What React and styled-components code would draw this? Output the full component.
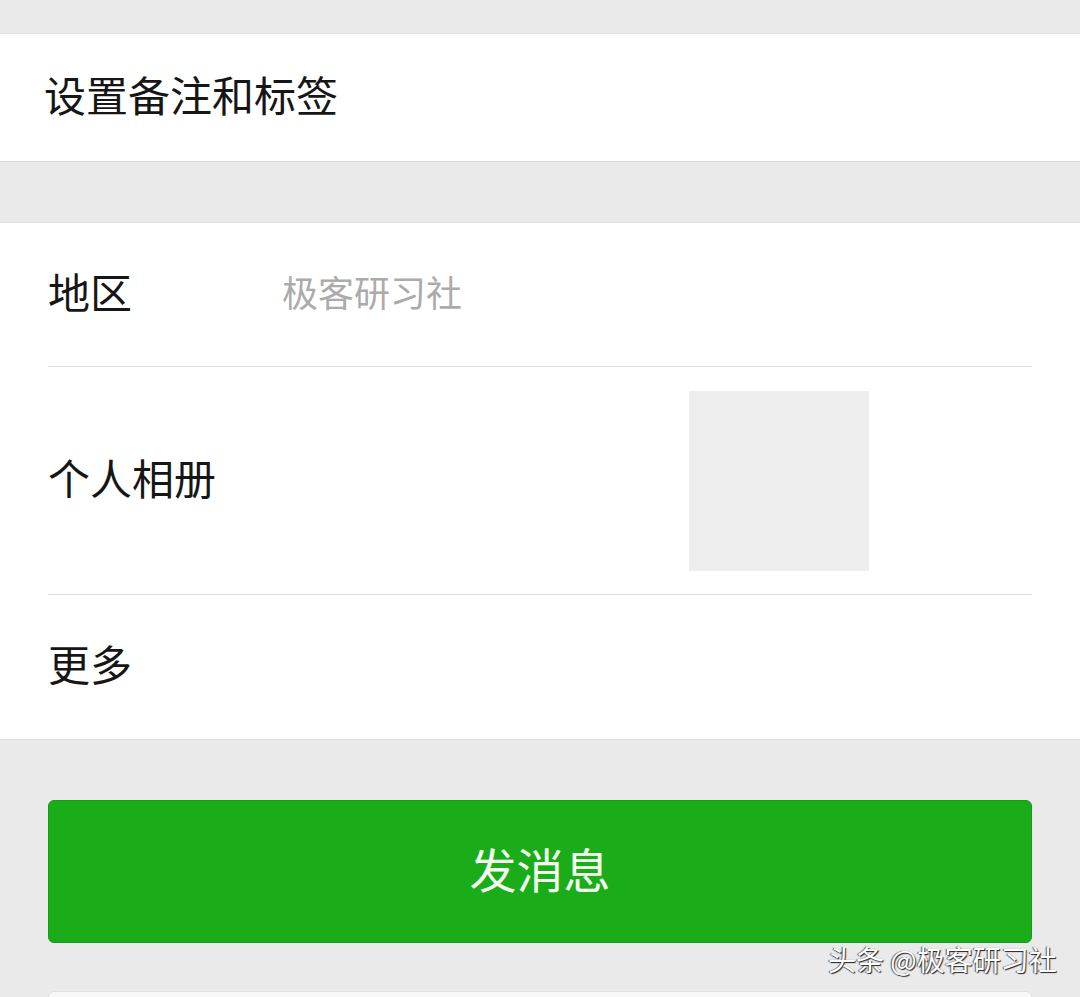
import React from 'react';
import styled, { createGlobalStyle } from 'styled-components';

const GlobalStyle = createGlobalStyle`
	html, body {
		margin: 0;
		padding: 0;
		background: #eaeaea;
		font-family: "Noto Sans CJK SC", "Noto Sans", sans-serif;
		overflow: hidden;
	}
`;

const App = () => {
	return (
		<Page>
			<GlobalStyle />
			<Section $top={33}>
				<SingleRow>
					<Label $inset={44}>设置备注和标签</Label>
				</SingleRow>
			</Section>

			<Section $top={60}>
				<Row $height={144}>
					<Label>地区</Label>
					<Value>极客研习社</Value>
				</Row>
				<Row $height={228}>
					<Label>个人相册</Label>
					<Thumb />
				</Row>
				<Row $height={144} $last>
					<Label>更多</Label>
				</Row>
			</Section>

			<Actions>
				<Button $primary>发消息</Button>
				<Button />
			</Actions>

			<Watermark>头条 @极客研习社</Watermark>
		</Page>
	);
};

export default App;

const Page = styled.div`
	position: relative;
	height: 997px;
	overflow: hidden;
	background: #eaeaea;
`;
const Section = styled.div`
	margin-top: ${(p) => p.$top}px;
	background: #fff;
	border-top: 1px solid #e0e0e0;
	border-bottom: 1px solid #dadada;
`;
const SingleRow = styled.div`
	display: flex;
	align-items: center;
	height: 127px;
	padding-bottom: 8px;
	box-sizing: border-box;
`;
const Row = styled.div`
	display: flex;
	align-items: center;
	height: ${(p) => p.$height}px;
	margin: 0 48px;
	padding-bottom: 8px;
	box-sizing: border-box;
	border-bottom: ${(p) => (p.$last ? 'none' : '1px solid #dcdcdc')};
`;
const Label = styled.div`
	padding-left: ${(p) => p.$inset || 0}px;
	width: ${(p) => (p.$inset ? 'auto' : '234px')};
	font-size: 42px;
	color: #161616;
	line-height: 1;
`;
const Value = styled.div`
	font-size: 36px;
	color: #ababab;
	line-height: 1;
`;
const Thumb = styled.div`
	width: 180px;
	height: 180px;
	margin-left: 407px;
	margin-top: 8px;
	background: #eeeeee;
`;
const Actions = styled.div`
	display: flex;
	flex-direction: column;
	gap: 48px;
	padding: 60px 48px 0;
`;
const Button = styled.div`
	display: flex;
	align-items: center;
	justify-content: center;
	height: 143px;
	padding-bottom: 8px;
	border-radius: 6px;
	font-size: 47px;
	background: ${(p) => (p.$primary ? '#1aad19' : '#f8f8f8')};
	color: ${(p) => (p.$primary ? '#f4fff2' : '#161616')};
	border: 1px solid ${(p) => (p.$primary ? '#179b16' : '#e2e2e2')};
	box-sizing: border-box;
`;
const Watermark = styled.div`
	position: absolute;
	left: 828px;
	top: 939px;
	font-size: 28px;
	color: #fff;
	text-shadow: 1px 1px 1px #222, -1px 0 1px #555;
	white-space: nowrap;
`;
